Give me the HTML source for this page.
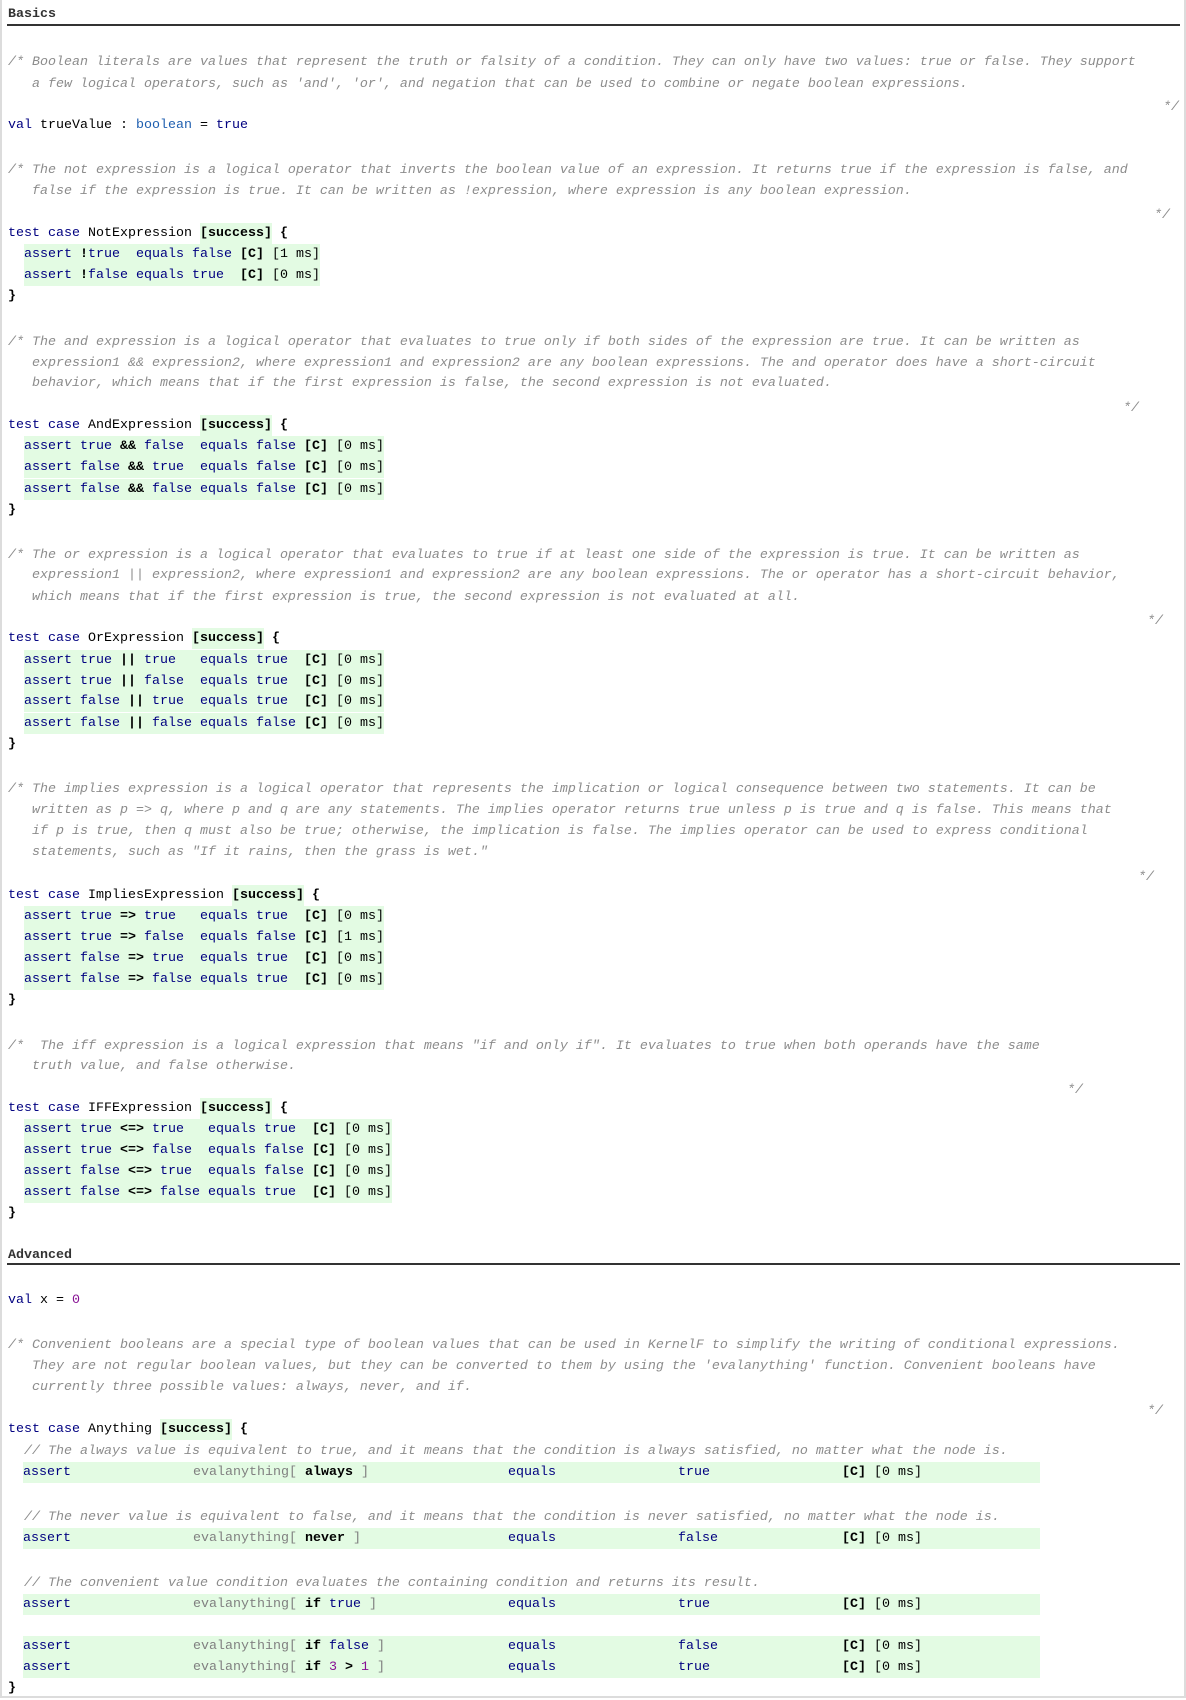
<!DOCTYPE html>
<html><head><meta charset="utf-8"><style>
html,body{margin:0;padding:0;background:#fff;}
body{width:1186px;height:1700px;position:relative;overflow:hidden;font-family:"Liberation Mono",monospace;font-size:13.33px;color:#000;}
.frame{position:absolute;left:0;top:0;width:1182px;height:1696px;border:2px solid #dcdcdc;border-top:none;}
.l{position:absolute;left:8px;height:21px;line-height:21px;white-space:pre;}
.c{color:#8c8c8c;font-style:italic;}
.k{color:#000080;}
.t{color:#1f5fb0;}
.n{color:#871094;}
.b{font-weight:bold;}
.g{background:#e3fbe3;display:inline-block;height:21px;}
.h{font-weight:bold;color:#333;}
.rule{position:absolute;left:7px;width:1173px;height:2px;background:#333;}
.row{position:absolute;left:23px;width:1017px;height:21px;line-height:21px;background:#e3fbe3;white-space:pre;}
.row span.a{position:absolute;}
.ev{color:#808080;}
</style></head><body>
<div class="frame"></div>

<div class="l h" style="top:4px">Basics</div>
<div class="rule" style="top:24px"></div>

<div class="l c" style="top:51.5px">/* Boolean literals are values that represent the truth or falsity of a condition. They can only have two values: true or false. They support</div>
<div class="l c" style="top:73.5px">   a few logical operators, such as 'and', 'or', and negation that can be used to combine or negate boolean expressions.</div>
<div class="l c" style="top:97px;left:1163px">*/</div>
<div class="l" style="top:114.5px"><span class="k">val</span> trueValue : <span class="t">boolean</span> = <span class="k">true</span></div>

<div class="l c" style="top:160px">/* The not expression is a logical operator that inverts the boolean value of an expression. It returns true if the expression is false, and</div>
<div class="l c" style="top:180.5px">   false if the expression is true. It can be written as !expression, where expression is any boolean expression.</div>
<div class="l c" style="top:204.5px;left:1154px">*/</div>
<div class="l" style="top:223px"><span class="k">test case</span> NotExpression <span class="g b">[success]</span> <span class="b">{</span></div>
<div class="l" style="top:243.5px">  <span class="g"><span class="k">assert</span> <span class="b">!</span><span class="k">true</span>  <span class="k">equals</span> <span class="k">false</span> <span class="b">[C]</span> [1 ms]</span></div>
<div class="l" style="top:264.5px">  <span class="g"><span class="k">assert</span> <span class="b">!</span><span class="k">false</span> <span class="k">equals</span> <span class="k">true</span>  <span class="b">[C]</span> [0 ms]</span></div>
<div class="l b" style="top:286px">}</div>

<div class="l c" style="top:331.5px">/* The and expression is a logical operator that evaluates to true only if both sides of the expression are true. It can be written as</div>
<div class="l c" style="top:352.5px">   expression1 &amp;&amp; expression2, where expression1 and expression2 are any boolean expressions. The and operator does have a short-circuit</div>
<div class="l c" style="top:372.5px">   behavior, which means that if the first expression is false, the second expression is not evaluated.</div>
<div class="l c" style="top:397.5px;left:1123px">*/</div>
<div class="l" style="top:415px"><span class="k">test case</span> AndExpression <span class="g b">[success]</span> <span class="b">{</span></div>
<div class="l" style="top:435.5px">  <span class="g"><span class="k">assert true</span> <span class="b">&amp;&amp;</span> <span class="k">false</span>  <span class="k">equals false</span> <span class="b">[C]</span> [0 ms]</span></div>
<div class="l" style="top:457px">  <span class="g"><span class="k">assert false</span> <span class="b">&amp;&amp;</span> <span class="k">true</span>  <span class="k">equals false</span> <span class="b">[C]</span> [0 ms]</span></div>
<div class="l" style="top:478.5px">  <span class="g"><span class="k">assert false</span> <span class="b">&amp;&amp;</span> <span class="k">false</span> <span class="k">equals false</span> <span class="b">[C]</span> [0 ms]</span></div>
<div class="l b" style="top:499.5px">}</div>

<div class="l c" style="top:544.5px">/* The or expression is a logical operator that evaluates to true if at least one side of the expression is true. It can be written as</div>
<div class="l c" style="top:565px">   expression1 || expression2, where expression1 and expression2 are any boolean expressions. The or operator has a short-circuit behavior,</div>
<div class="l c" style="top:586.5px">   which means that if the first expression is true, the second expression is not evaluated at all.</div>
<div class="l c" style="top:610.5px;left:1147px">*/</div>
<div class="l" style="top:628px"><span class="k">test case</span> OrExpression <span class="g b">[success]</span> <span class="b">{</span></div>
<div class="l" style="top:649.5px">  <span class="g"><span class="k">assert true</span> <span class="b">||</span> <span class="k">true</span>   <span class="k">equals true</span>  <span class="b">[C]</span> [0 ms]</span></div>
<div class="l" style="top:670.5px">  <span class="g"><span class="k">assert true</span> <span class="b">||</span> <span class="k">false</span>  <span class="k">equals true</span>  <span class="b">[C]</span> [0 ms]</span></div>
<div class="l" style="top:691px">  <span class="g"><span class="k">assert false</span> <span class="b">||</span> <span class="k">true</span>  <span class="k">equals true</span>  <span class="b">[C]</span> [0 ms]</span></div>
<div class="l" style="top:712.5px">  <span class="g"><span class="k">assert false</span> <span class="b">||</span> <span class="k">false</span> <span class="k">equals false</span> <span class="b">[C]</span> [0 ms]</span></div>
<div class="l b" style="top:733.5px">}</div>

<div class="l c" style="top:779px">/* The implies expression is a logical operator that represents the implication or logical consequence between two statements. It can be</div>
<div class="l c" style="top:799.5px">   written as p =&gt; q, where p and q are any statements. The implies operator returns true unless p is true and q is false. This means that</div>
<div class="l c" style="top:821px">   if p is true, then q must also be true; otherwise, the implication is false. The implies operator can be used to express conditional</div>
<div class="l c" style="top:842px">   statements, such as "If it rains, then the grass is wet."</div>
<div class="l c" style="top:867px;left:1138px">*/</div>
<div class="l" style="top:884.5px"><span class="k">test case</span> ImpliesExpression <span class="g b">[success]</span> <span class="b">{</span></div>
<div class="l" style="top:906px">  <span class="g"><span class="k">assert true</span> <span class="b">=&gt;</span> <span class="k">true</span>   <span class="k">equals true</span>  <span class="b">[C]</span> [0 ms]</span></div>
<div class="l" style="top:926.5px">  <span class="g"><span class="k">assert true</span> <span class="b">=&gt;</span> <span class="k">false</span>  <span class="k">equals false</span> <span class="b">[C]</span> [1 ms]</span></div>
<div class="l" style="top:947.5px">  <span class="g"><span class="k">assert false</span> <span class="b">=&gt;</span> <span class="k">true</span>  <span class="k">equals true</span>  <span class="b">[C]</span> [0 ms]</span></div>
<div class="l" style="top:969px">  <span class="g"><span class="k">assert false</span> <span class="b">=&gt;</span> <span class="k">false</span> <span class="k">equals true</span>  <span class="b">[C]</span> [0 ms]</span></div>
<div class="l b" style="top:989.5px">}</div>

<div class="l c" style="top:1035.5px">/*  The iff expression is a logical expression that means "if and only if". It evaluates to true when both operands have the same</div>
<div class="l c" style="top:1056px">   truth value, and false otherwise.</div>
<div class="l c" style="top:1079.5px;left:1067px">*/</div>
<div class="l" style="top:1097.5px"><span class="k">test case</span> IFFExpression <span class="g b">[success]</span> <span class="b">{</span></div>
<div class="l" style="top:1119px">  <span class="g"><span class="k">assert true</span> <span class="b">&lt;=&gt;</span> <span class="k">true</span>   <span class="k">equals true</span>  <span class="b">[C]</span> [0 ms]</span></div>
<div class="l" style="top:1139.5px">  <span class="g"><span class="k">assert true</span> <span class="b">&lt;=&gt;</span> <span class="k">false</span>  <span class="k">equals false</span> <span class="b">[C]</span> [0 ms]</span></div>
<div class="l" style="top:1161px">  <span class="g"><span class="k">assert false</span> <span class="b">&lt;=&gt;</span> <span class="k">true</span>  <span class="k">equals false</span> <span class="b">[C]</span> [0 ms]</span></div>
<div class="l" style="top:1182px">  <span class="g"><span class="k">assert false</span> <span class="b">&lt;=&gt;</span> <span class="k">false</span> <span class="k">equals true</span>  <span class="b">[C]</span> [0 ms]</span></div>
<div class="l b" style="top:1202.5px">}</div>

<div class="l h" style="top:1244.5px">Advanced</div>
<div class="rule" style="top:1263px"></div>
<div class="l" style="top:1289.5px"><span class="k">val</span> x = <span class="n">0</span></div>

<div class="l c" style="top:1334.5px">/* Convenient booleans are a special type of boolean values that can be used in KernelF to simplify the writing of conditional expressions.</div>
<div class="l c" style="top:1355.5px">   They are not regular boolean values, but they can be converted to them by using the 'evalanything' function. Convenient booleans have</div>
<div class="l c" style="top:1376.5px">   currently three possible values: always, never, and if.</div>
<div class="l c" style="top:1400.5px;left:1147px">*/</div>
<div class="l" style="top:1418.5px"><span class="k">test case</span> Anything <span class="g b">[success]</span> <span class="b">{</span></div>

<div class="l c" style="top:1441px">  // The always value is equivalent to true, and it means that the condition is always satisfied, no matter what the node is.</div>
<div class="row" style="top:1462px"><span class="a k" style="left:0">assert</span><span class="a ev" style="left:170px">evalanything[ <span class="b" style="color:#000">always</span> ]</span><span class="a k" style="left:485px">equals</span><span class="a k" style="left:655px">true</span><span class="a" style="left:819px"><span class="b">[C]</span> [0 ms]</span></div>

<div class="l c" style="top:1507px">  // The never value is equivalent to false, and it means that the condition is never satisfied, no matter what the node is.</div>
<div class="row" style="top:1528px"><span class="a k" style="left:0">assert</span><span class="a ev" style="left:170px">evalanything[ <span class="b" style="color:#000">never</span> ]</span><span class="a k" style="left:485px">equals</span><span class="a k" style="left:655px">false</span><span class="a" style="left:819px"><span class="b">[C]</span> [0 ms]</span></div>

<div class="l c" style="top:1573px">  // The convenient value condition evaluates the containing condition and returns its result.</div>
<div class="row" style="top:1594px"><span class="a k" style="left:0">assert</span><span class="a ev" style="left:170px">evalanything[ <span class="b" style="color:#000">if</span> <span class="k">true</span> ]</span><span class="a k" style="left:485px">equals</span><span class="a k" style="left:655px">true</span><span class="a" style="left:819px"><span class="b">[C]</span> [0 ms]</span></div>

<div class="row" style="top:1636px"><span class="a k" style="left:0">assert</span><span class="a ev" style="left:170px">evalanything[ <span class="b" style="color:#000">if</span> <span class="k">false</span> ]</span><span class="a k" style="left:485px">equals</span><span class="a k" style="left:655px">false</span><span class="a" style="left:819px"><span class="b">[C]</span> [0 ms]</span></div>
<div class="row" style="top:1657px"><span class="a k" style="left:0">assert</span><span class="a ev" style="left:170px">evalanything[ <span class="b" style="color:#000">if</span> <span class="n">3</span> <span class="b" style="color:#000">&gt;</span> <span class="n">1</span> ]</span><span class="a k" style="left:485px">equals</span><span class="a k" style="left:655px">true</span><span class="a" style="left:819px"><span class="b">[C]</span> [0 ms]</span></div>
<div class="l b" style="top:1677.5px">}</div>
</body></html>
